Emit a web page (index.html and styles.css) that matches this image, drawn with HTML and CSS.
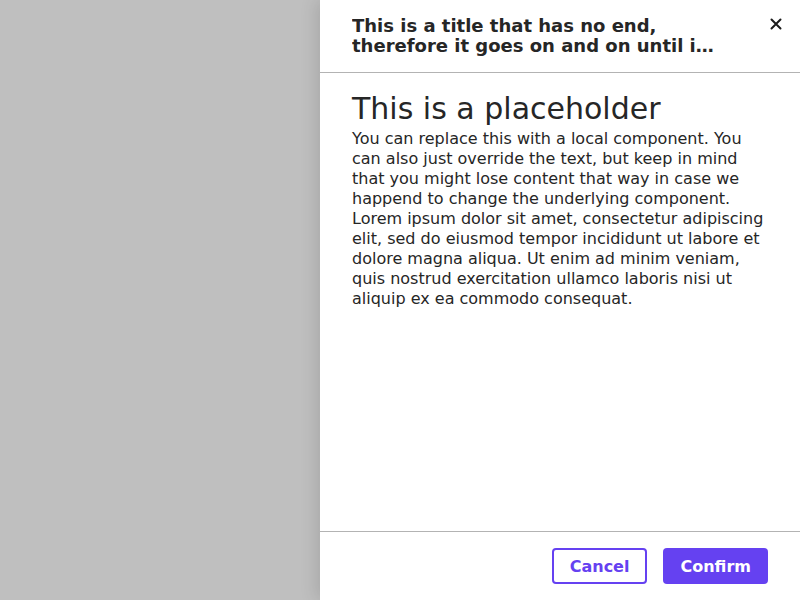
FILE: index.html
```html
<!DOCTYPE html>
<html>
<head>
<meta charset="utf-8">
<link rel="stylesheet" href="styles.css">
</head>
<body>
<div class="overlay"></div>
<aside class="drawer">
  <header class="drawer-header">
    <h2 class="drawer-title">This is a title that has no end, therefore it goes on and on until it reaches the end of the available space and beyond</h2>
    <button class="close-btn" aria-label="Close">
      <svg width="12" height="12" viewBox="0 0 12 12"><path d="M1.5 1.5 L10.5 10.5 M10.5 1.5 L1.5 10.5" stroke="#1a1a1a" stroke-width="2" stroke-linecap="round"/></svg>
    </button>
  </header>
  <main class="drawer-body">
    <h1 class="placeholder-title">This is a placeholder</h1>
    <p class="placeholder-text">You can replace this with a local component. You can also just override the text, but keep in mind that you might lose content that way in case we happend to change the underlying component. Lorem ipsum dolor sit amet, consectetur adipiscing elit, sed do eiusmod tempor incididunt ut labore et dolore magna aliqua. Ut enim ad minim veniam, quis nostrud exercitation ullamco laboris nisi ut aliquip ex ea commodo consequat.</p>
  </main>
  <footer class="drawer-footer">
    <button class="btn btn-outline">Cancel</button>
    <button class="btn btn-primary">Confirm</button>
  </footer>
</aside>
</body>
</html>
```
FILE: styles.css
```css
html, body {
  margin: 0;
  padding: 0;
  height: 100%;
}
body {
  font-family: "DejaVu Sans", sans-serif;
  color: #262626;
  background: #ffffff;
  display: flex;
  overflow: hidden;
}
.overlay {
  width: 320px;
  flex: none;
  background: #bfbfbf;
}
.drawer {
  flex: 1;
  display: flex;
  flex-direction: column;
  background: #ffffff;
  box-shadow: -4px 0 16px rgba(0, 0, 0, 0.12);
  position: relative;
}
.drawer-header {
  display: flex;
  align-items: flex-start;
  padding: 16px 16px 16px 32px;
  border-bottom: 1px solid #b3b3b3;
  height: 40px;
}
.drawer-title {
  margin: 0;
  flex: 1;
  font-size: 18px;
  line-height: 20px;
  font-weight: bold;
  color: #262626;
  max-width: 370px;
  display: -webkit-box;
  -webkit-line-clamp: 2;
  -webkit-box-orient: vertical;
  overflow: hidden;
}
.close-btn {
  margin-left: auto;
  background: none;
  border: none;
  padding: 0;
  width: 16px;
  height: 16px;
  display: flex;
  align-items: center;
  justify-content: center;
  cursor: pointer;
}
.drawer-body {
  flex: 1;
  padding: 16px 32px;
}
.placeholder-title {
  margin: 0;
  font-size: 30px;
  line-height: 40px;
  font-weight: normal;
  color: #262626;
}
.placeholder-text {
  margin: 0;
  font-size: 16px;
  line-height: 20px;
  color: #262626;
}
.drawer-footer {
  border-top: 1px solid #b3b3b3;
  padding: 16px 32px;
  display: flex;
  justify-content: flex-end;
  gap: 16px;
}
.btn {
  font-family: "DejaVu Sans", sans-serif;
  font-size: 16px;
  font-weight: bold;
  height: 36px;
  padding: 0 16px;
  border-radius: 4px;
  cursor: pointer;
}
.btn-outline {
  background: #ffffff;
  color: #6541f1;
  border: 2px solid #6541f1;
}
.btn-primary {
  background: #6541f1;
  color: #ffffff;
  border: none;
  padding: 0 17px;
}
```
